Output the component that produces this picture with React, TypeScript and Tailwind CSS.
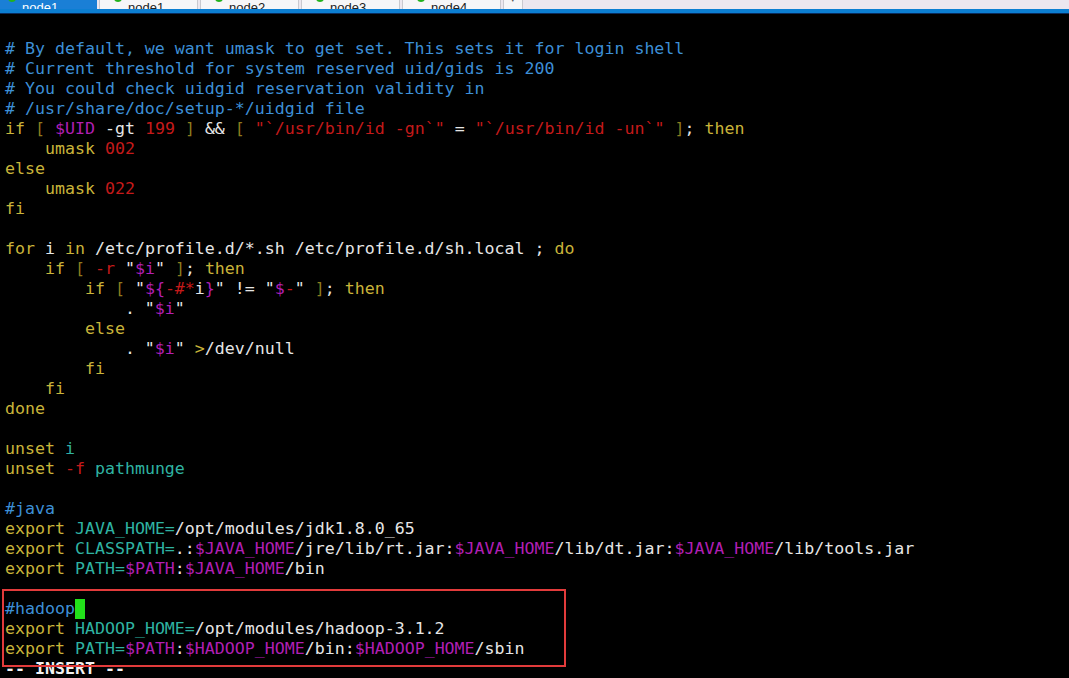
import React from "react";

type Seg = [string, string];

const C = "text-[#3d8fd6]"; // comment
const K = "text-[#c9b43a]"; // keyword
const V = "text-[#b01fb4]"; // variable
const R = "text-[#c41a1a]"; // number / string
const T = "text-[#2fb3a2]"; // identifier
const W = "text-[#e6e6e6]"; // plain
const B = "text-[#8c7a1e]"; // brackets

const lines: Seg[][] = [
  [["# By default, we want umask to get set. This sets it for login shell", C]],
  [["# Current threshold for system reserved uid/gids is 200", C]],
  [["# You could check uidgid reservation validity in", C]],
  [["# /usr/share/doc/setup-*/uidgid file", C]],
  [
    ["if", K], [" ", W], ["[", B], [" ", W], ["$UID", V], [" -gt ", W], ["199", R], [" ", W], ["]", B],
    [" && ", W], ["[", B], [" ", W], ['"`/usr/bin/id -gn`"', R], [" = ", W], ['"`/usr/bin/id -un`"', R],
    [" ", W], ["]", B], ["; ", W], ["then", K],
  ],
  [["    umask ", K], ["002", R]],
  [["else", K]],
  [["    umask ", K], ["022", R]],
  [["fi", K]],
  [],
  [
    ["for", K], [" i ", W], ["in", K], [" /etc/profile.d/*.sh /etc/profile.d/sh.local ; ", W], ["do", K],
  ],
  [
    ["    if", K], [" ", W], ["[", B], [" ", W], ["-r", R], [' "', W], ["$i", V], ['" ', W], ["]", B], ["; ", W], ["then", K],
  ],
  [
    ["        if", K], [" ", W], ["[", B], [' "', W], ["${", V], ["-#*", R], ["i", W], ["}", V], ['" != "', W],
    ["$", V], ["-", R], ['" ', W], ["]", B], ["; ", W], ["then", K],
  ],
  [["            . \"", W], ["$i", V], ['"', W]],
  [["        else", K]],
  [["            . \"", W], ["$i", V], ['" ', W], [">", K], ["/dev/null", W]],
  [["        fi", K]],
  [["    fi", K]],
  [["done", K]],
  [],
  [["unset", K], [" ", W], ["i", T]],
  [["unset", K], [" ", W], ["-f", R], [" ", W], ["pathmunge", T]],
  [],
  [["#java", C]],
  [["export", K], [" ", W], ["JAVA_HOME=", T], ["/opt/modules/jdk1.8.0_65", W]],
  [
    ["export", K], [" ", W], ["CLASSPATH=", T], [".:", W], ["$JAVA_HOME", V], ["/jre/lib/rt.jar:", W],
    ["$JAVA_HOME", V], ["/lib/dt.jar:", W], ["$JAVA_HOME", V], ["/lib/tools.jar", W],
  ],
  [["export", K], [" ", W], ["PATH=", T], ["$PATH", V], [":", W], ["$JAVA_HOME", V], ["/bin", W]],
  [],
];

const tabs = ["2 node1", "3 node2", "4 node3", "5 node4"];

function Tab({ label, active }: { label: string; active?: boolean }) {
  const [num, ...rest] = label.split(" ");
  return (
    <div
      className={
        active
          ? "flex h-[24px] w-[97px] items-center gap-[6px] bg-[#1a7fd6] pl-[8px] text-white"
          : "ml-[2px] flex h-[24px] w-[99px] items-center gap-[6px] border-x border-[#c9c9cf] bg-[#f6f6f8] pl-[14px] text-[#222]"
      }
    >
      <span className="h-[8px] w-[8px] rounded-full bg-[#22b21c]" />
      <span className="flex-1">
        <span className="underline">{num}</span> {rest.join(" ")}
      </span>
      <span className={active ? "pr-[10px] text-[#bcd9f3]" : "pr-[10px] text-[#aaa]"}>···</span>
    </div>
  );
}

export default function App() {
  return (
    <div className="h-[678px] w-[1069px] overflow-hidden bg-black">
      {/* tab strip */}
      <div className="h-[9px] overflow-hidden bg-[#ece7ef]">
        <div className="-mt-[14px] flex items-center font-['Liberation_Sans',sans-serif] text-[13px]">
          <Tab label="1 node1" active />
          {tabs.map((t) => (
            <Tab key={t} label={t} />
          ))}
          <div className="ml-[2px] flex h-[24px] w-[20px] items-center justify-center border-x border-[#c9c9cf] bg-[#f6f6f8] text-[11px] text-[#555]">
            ▾
          </div>
        </div>
      </div>
      <div className="h-[4px] bg-[#0c7fd2]" />
      <div className="h-px bg-[#0a2c5c]" />

      {/* vim buffer */}
      <div className="relative pl-[5px] pt-[25px] font-['DejaVu_Sans_Mono',monospace] text-[16.6px] leading-[20px]">
        {lines.map((segs, i) => (
          <div key={i} className="h-[20px] whitespace-pre">
            {segs.map(([text, cls], j) => (
              <span key={j} className={cls}>
                {text}
              </span>
            ))}
          </div>
        ))}
        <div className="h-[20px] whitespace-pre">
          <span className={C}>#hadoop</span>
          <span className="inline-block h-[20px] w-[10px] bg-[#22e01a] align-top" />
        </div>
        <div className="h-[20px] whitespace-pre">
          <span className={K}>export</span> <span className={T}>HADOOP_HOME=</span>
          <span className={W}>/opt/modules/hadoop-3.1.2</span>
        </div>
        <div className="h-[20px] whitespace-pre">
          <span className={K}>export</span> <span className={T}>PATH=</span>
          <span className={V}>$PATH</span>
          <span className={W}>:</span>
          <span className={V}>$HADOOP_HOME</span>
          <span className={W}>/bin:</span>
          <span className={V}>$HADOOP_HOME</span>
          <span className={W}>/sbin</span>
        </div>
        <div className="h-[20px] whitespace-pre font-bold text-[#f2f2f2]">-- INSERT --</div>

        {/* annotation box */}
        <div className="absolute left-[2px] top-[575px] h-[78px] w-[564px] border-2 border-[#e23b3b]" />
      </div>
    </div>
  );
}
